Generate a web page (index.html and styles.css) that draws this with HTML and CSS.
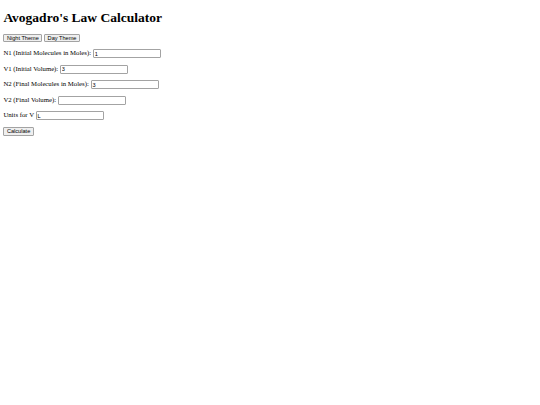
FILE: index.html
```html
<!DOCTYPE html>
<html lang="en">
<head>
<meta charset="utf-8">
<title>Avogadro's Law Calculator</title>
<link rel="stylesheet" href="styles.css">
</head>
<body>
<h1 class="title">Avogadro's Law Calculator</h1>
<div class="themes">
  <button class="btn">Night Theme</button>
  <button class="btn">Day Theme</button>
</div>
<div class="row"><label class="lbl">N1 (Initial Molecules in Moles):</label> <input class="field" type="text" value="1"></div>
<div class="row"><label class="lbl">V1 (Initial Volume):</label> <input class="field" type="text" value="3"></div>
<div class="row"><label class="lbl">N2 (Final Molecules in Moles):</label> <input class="field" type="text" value="3"></div>
<div class="row"><label class="lbl">V2 (Final Volume):</label> <input class="field" type="text" value=""></div>
<div class="row"><label class="lbl">Units for V</label> <input class="field" type="text" value="L"></div>
<div class="actions"><button class="btn">Calculate</button></div>
</body>
</html>
```
FILE: styles.css
```css
html {
  background: #ffffff;
}
body {
  margin: 3.375px;
  font-family: "Liberation Serif", "Times New Roman", serif;
  font-size: 6.75px;
  color: #000000;
}
.title {
  font-size: 13.5px;
  font-weight: bold;
  margin: 7px 0 7.3px;
}
.themes {
  margin: 0;
}
.row {
  margin: 6.75px 0;
}
.actions {
  margin: 6.75px 0;
}
.btn {
  font-family: "Liberation Sans", Arial, sans-serif;
  font-size: 5.625px;
  padding: 0.42px 2.5px;
  margin: 0;
  background: #efefef;
  color: #000;
  border: 0.84px solid #a3a3a3;
  border-radius: 1px;
}
.field {
  font-family: "Liberation Sans", Arial, sans-serif;
  font-size: 5.625px;
  padding: 0.42px 0.84px;
  margin: 0;
  border: 0.84px solid #a3a3a3;
  border-radius: 1px;
  width: 64.5px;
  color: #000;
  background: #fff;
}
```
